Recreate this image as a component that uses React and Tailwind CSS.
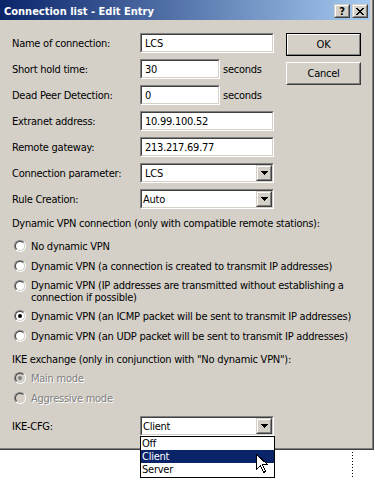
import React from "react";

const Sunken = ({ className = "", inner = "", children }) => (
  <div className={"border border-t-[#808080] border-l-[#808080] border-r-white border-b-white " + className}>
    <div className={"h-full w-full border border-t-[#404040] border-l-[#404040] border-r-[#D4D0C8] border-b-[#D4D0C8] " + inner}>
      {children}
    </div>
  </div>
);

const Raised = ({ className = "", inner = "", children }) => (
  <div className={"border border-t-[#D4D0C8] border-l-[#D4D0C8] border-r-[#404040] border-b-[#404040] bg-[#D4D0C8] " + className}>
    <div className={"h-full w-full border border-t-white border-l-white border-r-[#808080] border-b-[#808080] " + inner}>
      {children}
    </div>
  </div>
);

const PushButton = ({ label, isDefault }) =>
  isDefault ? (
    <div className="w-[75px] h-[23px] border border-black bg-[#D4D0C8]">
      <div className="h-full w-full border border-t-white border-l-white border-r-[#808080] border-b-[#808080] flex items-center justify-center">
        {label}
      </div>
    </div>
  ) : (
    <div className="w-[75px] h-[23px] border border-t-white border-l-white border-r-[#404040] border-b-[#404040] bg-[#D4D0C8]">
      <div className="h-full w-full border border-t-[#D4D0C8] border-l-[#D4D0C8] border-r-[#808080] border-b-[#808080] flex items-center justify-center">
        {label}
      </div>
    </div>
  );

const Edit = ({ w, value }) => (
  <Sunken className={w + " h-[20px]"} inner="bg-white flex items-center pl-[3px]">
    {value}
  </Sunken>
);

const Tri = () => (
  <svg width="7" height="4" viewBox="0 0 7 4" shapeRendering="crispEdges">
    <rect x="0" y="0" width="7" height="1" fill="#000" />
    <rect x="1" y="1" width="5" height="1" fill="#000" />
    <rect x="2" y="2" width="3" height="1" fill="#000" />
    <rect x="3" y="3" width="1" height="1" fill="#000" />
  </svg>
);

const Combo = ({ value, pl }) => (
  <Sunken className="w-[134px] h-[20px]" inner="bg-white flex items-center">
    <span className={"flex-1 " + pl}>{value}</span>
    <Raised className="w-[16px] h-[16px]" inner="flex items-center justify-center">
      <Tri />
    </Raised>
  </Sunken>
);

const Radio = ({ checked, disabled }) => (
  <div className="w-[12px] h-[12px] shrink-0 rounded-full border border-t-[#808080] border-l-[#808080] border-r-white border-b-white">
    <div
      className={
        "w-full h-full rounded-full border border-t-[#404040] border-l-[#404040] border-r-[#D4D0C8] border-b-[#D4D0C8] flex items-center justify-center " +
        (disabled ? "bg-[#D4D0C8]" : "bg-white")
      }
    >
      {checked && <div className={"w-[4px] h-[4px] rounded-full " + (disabled ? "bg-[#808080]" : "bg-black")} />}
    </div>
  </div>
);

const Row = ({ label, children }) => (
  <div className="flex items-center h-[20px]">
    <div className="w-[128px]">{label}</div>
    {children}
  </div>
);

export default function App() {
  return (
    <div className="w-[374px] h-[478px] bg-white relative overflow-hidden font-['DejaVu_Sans_Condensed','Liberation_Sans',Arial,sans-serif] text-[11px] leading-[13px] tracking-[-0.25px] text-black">
      <div className="w-[374px] h-[450px] border-r border-b border-r-[#404040] border-b-[#404040]">
        <div className="h-full border-r border-b border-r-[#808080] border-b-[#808080] bg-[#D4D0C8] pr-[2px] flex flex-col">
          {/* title bar */}
          <div className="h-[20px] bg-linear-to-r/srgb from-[#0A246A] to-[#A6CAF0] flex items-center pt-[2px] pl-[4px] pr-[2px]">
            <div className="flex-1 text-white font-bold tracking-normal">Connection list - Edit Entry</div>
            <Raised className="w-[16px] h-[14px]" inner="flex items-center justify-center font-bold text-[11px] leading-none tracking-normal">
              ?
            </Raised>
            <Raised className="w-[16px] h-[14px] ml-[2px]" inner="flex items-center justify-center">
              <svg width="8" height="7" viewBox="0 0 8 7" shapeRendering="crispEdges">
                <path d="M0 0h2v1h-2zM6 0h2v1h-2zM1 1h2v1h-2zM5 1h2v1h-2zM2 2h4v1h-4zM3 3h2v1h-2zM2 4h4v1h-4zM1 5h2v1h-2zM5 5h2v1h-2zM0 6h2v1h-2zM6 6h2v1h-2z" fill="#000" />
              </svg>
            </Raised>
          </div>

          {/* content */}
          <div className="pl-[12px] pt-[13px]">
            <div className="flex">
              <div className="w-[262px] flex flex-col gap-[6px]">
                <Row label="Name of connection:">
                  <Edit w="w-[134px]" value="LCS" />
                </Row>
                <Row label="Short hold time:">
                  <Edit w="w-[80px]" value="30" />
                  <span className="ml-[3px]">seconds</span>
                </Row>
                <Row label="Dead Peer Detection:">
                  <Edit w="w-[80px]" value="0" />
                  <span className="ml-[3px]">seconds</span>
                </Row>
                <Row label="Extranet address:">
                  <Edit w="w-[134px]" value="10.99.100.52" />
                </Row>
                <Row label="Remote gateway:">
                  <Edit w="w-[134px]" value="213.217.69.77" />
                </Row>
                <Row label="Connection parameter:">
                  <Combo value="LCS" pl="pl-[3px]" />
                </Row>
                <Row label="Rule Creation:">
                  <Combo value="Auto" pl="pl-[1px]" />
                </Row>
              </div>
              <div className="ml-[12px] flex flex-col gap-[6px]">
                <PushButton label="OK" isDefault />
                <PushButton label="Cancel" />
              </div>
            </div>

            <div className="mt-[8px]">Dynamic VPN connection (only with compatible remote stations):</div>

            <div className="mt-[10px] ml-[2px] flex flex-col">
              <div className="flex items-center h-[12px] gap-[5px]">
                <Radio />
                <span>No dynamic VPN</span>
              </div>
              <div className="flex items-center h-[12px] gap-[5px] mt-[8px]">
                <Radio />
                <span>Dynamic VPN (a connection is created to transmit IP addresses)</span>
              </div>
              <div className="flex items-start gap-[5px] mt-[8px] leading-[12px]">
                <Radio />
                <span className="whitespace-nowrap">
                  Dynamic VPN (IP addresses are transmitted without establishing a
                  <br />
                  connection if possible)
                </span>
              </div>
              <div className="flex items-center h-[12px] gap-[5px] mt-[6px]">
                <Radio checked />
                <span className="whitespace-nowrap">Dynamic VPN (an ICMP packet will be sent to transmit IP addresses)</span>
              </div>
              <div className="flex items-center h-[12px] gap-[5px] mt-[8px]">
                <Radio />
                <span className="whitespace-nowrap">Dynamic VPN (an UDP packet will be sent to transmit IP addresses)</span>
              </div>
            </div>

            <div className="mt-[11px]">IKE exchange (only in conjunction with "No dynamic VPN"):</div>

            <div className="mt-[6px] ml-[2px] flex flex-col">
              <div className="flex items-center h-[12px] gap-[5px]">
                <Radio checked disabled />
                <span className="text-[#808080] [text-shadow:1px_1px_0_#fff]">Main mode</span>
              </div>
              <div className="flex items-center h-[12px] gap-[5px] mt-[8px]">
                <Radio disabled />
                <span className="text-[#808080] [text-shadow:1px_1px_0_#fff]">Aggressive mode</span>
              </div>
            </div>

            <div className="mt-[12px] flex items-center h-[20px]">
              <div className="w-[128px]">IKE-CFG:</div>
              <Combo value="Client" pl="pl-[1px]" />
            </div>
          </div>
        </div>
      </div>

      {/* open dropdown list */}
      <div className="absolute left-[140px] top-[436px] w-[135px] h-[42px] bg-white border border-black flex flex-col">
        <div className="h-[13px] pl-[1px] flex items-center">Off</div>
        <div className="h-[13px] pl-[1px] flex items-center bg-[#0A246A] text-white">Client</div>
        <div className="h-[13px] pl-[1px] flex items-center">Server</div>
      </div>

      {/* mouse cursor */}
      <svg className="absolute left-[256px] top-[454px]" width="12" height="20" viewBox="0 0 12 20" shapeRendering="crispEdges">
        <path d="M0.5 0.5 L0.5 15.5 L4.5 11.5 L7.5 18.5 L9.5 17.5 L6.5 10.5 L11.5 10.5 Z" fill="#fff" stroke="#000" strokeWidth="1" />
      </svg>

      {/* dotted guide */}
      <svg className="absolute left-[352px] top-[452px]" width="1" height="26" viewBox="0 0 1 26">
        <line x1="0.5" y1="0" x2="0.5" y2="26" stroke="#000" strokeWidth="1" strokeDasharray="1 2" />
      </svg>
    </div>
  );
}
